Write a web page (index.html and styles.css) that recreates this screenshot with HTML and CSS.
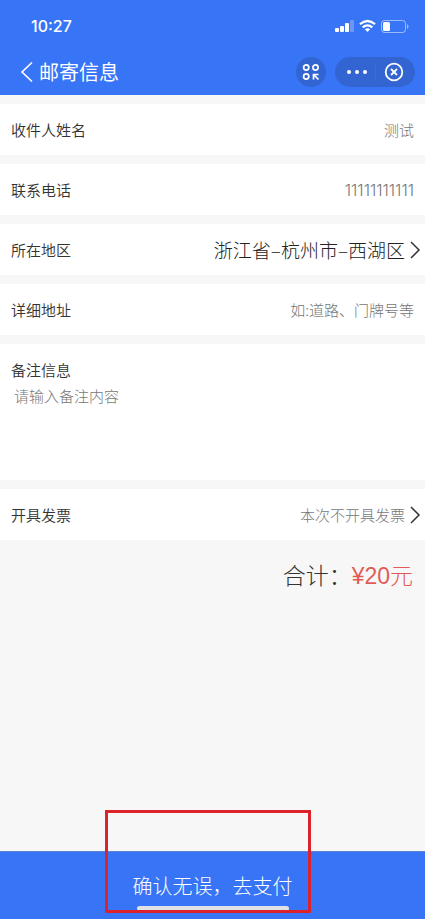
FILE: index.html
```html
<!DOCTYPE html>
<html lang="zh-CN">
<head>
<meta charset="utf-8">
<meta name="viewport" content="width=device-width, initial-scale=1">
<title>邮寄信息</title>
<link rel="stylesheet" href="styles.css">
</head>
<body>
<header class="header">
  <div class="status">
    <span class="clock">10:27</span>
    <svg class="status-icons" width="74" height="14" viewBox="0 0 74 14" aria-hidden="true">
      <g fill="#fff">
        <rect x="0" y="9" width="4" height="4" rx="1"/>
        <rect x="5" y="7" width="4" height="6" rx="1"/>
        <rect x="10" y="4" width="4" height="9" rx="1"/>
        <rect x="15" y="1" width="4" height="12" rx="1" opacity=".25"/>
        <rect x="48" y="3" width="7" height="9" rx="1.5"/>
        <path d="M72 5v5q1.500-.8 1.500-2.500T72 5z" opacity=".5"/>
        <path d="M32.500 13l-2.600-2.700q2.600-2 5.200 0z"/>
      </g>
      <rect x="46.500" y="1.500" width="24" height="12" rx="3" fill="none" stroke="#fff" opacity=".5"/>
      <g fill="none" stroke="#fff" stroke-width="2.200">
        <path d="M25 5.200q7.500-6.400 15 0"/>
        <path d="M27.700 8.300q4.800-4 9.600 0"/>
      </g>
    </svg>
  </div>
  <div class="nav">
    <button class="back" type="button" aria-label="返回">
      <svg width="14" height="22" viewBox="0 0 14 22"><path d="M12 1.500L2 11l10 9.500" fill="none" stroke="#fff" stroke-width="1.600"/></svg>
    </button>
    <h1 class="title">邮寄信息</h1>
    <button class="round" type="button" aria-label="收藏">
      <svg width="18" height="18" viewBox="0 0 18 18" fill="none" stroke="#fff" stroke-width="1.700">
        <circle cx="4.200" cy="4.500" r="2.600"/><circle cx="13.500" cy="4.500" r="2.600"/><circle cx="4.200" cy="13.500" r="2.600"/>
        <path d="M11.500 16.500v-5h5M12 12l4.500 4.500"/>
      </svg>
    </button>
    <div class="capsule">
      <button class="cap-button" type="button" aria-label="更多">
        <svg width="20" height="6" viewBox="0 0 20 6" fill="#fff"><circle cx="2" cy="3" r="2"/><circle cx="10" cy="3" r="2"/><circle cx="18" cy="3" r="2"/></svg>
      </button>
      <button class="cap-button cap-close" type="button" aria-label="关闭">
        <svg width="20" height="20" viewBox="0 0 20 20" fill="none" stroke="#fff" stroke-width="1.800"><circle cx="10" cy="10" r="8.300"/><path d="M7 7l6 6M13 7l-6 6"/></svg>
      </button>
    </div>
  </div>
</header>
<form class="form">
  <div class="row">
    <label class="label" for="name">收件人姓名</label>
    <input class="field" id="name" type="text" value="测试">
  </div>
  <div class="row">
    <label class="label" for="phone">联系电话</label>
    <input class="field field-phone" id="phone" type="tel" value="11111111111">
  </div>
  <div class="row">
    <label class="label" for="region">所在地区</label>
    <button class="picker picker-large" id="region" type="button">浙江省–杭州市–西湖区
      <svg class="chevron" width="12" height="20" viewBox="0 0 12 20"><path d="M2 2l8 8-8 8" fill="none" stroke="#333" stroke-width="1.500"/></svg>
    </button>
  </div>
  <div class="row">
    <label class="label" for="address">详细地址</label>
    <input class="field" id="address" type="text" placeholder="如:道路、门牌号等">
  </div>
  <div class="row row-note">
    <label class="label" for="note">备注信息</label>
    <textarea class="note" id="note" placeholder="请输入备注内容"></textarea>
  </div>
  <div class="row">
    <label class="label" for="invoice">开具发票</label>
    <button class="picker" id="invoice" type="button">本次不开具发票
      <svg class="chevron" width="12" height="20" viewBox="0 0 12 20"><path d="M2 2l8 8-8 8" fill="none" stroke="#333" stroke-width="1.500"/></svg>
    </button>
  </div>
  <p class="total">合计：<span class="price">¥20元</span></p>
</form>
<footer class="footer">
  <button class="pay" type="button">确认无误，去支付</button>
  <span class="home-bar"></span>
  <span class="highlight"></span>
</footer>
</body>
</html>
```
FILE: styles.css
```css
* {
  box-sizing: border-box;
}

body {
  display: flex;
  flex-direction: column;
  min-height: 100vh;
  margin: 0;
  background: #f7f7f7;
  color: #333;
  font-family: "Noto Sans CJK SC", sans-serif;
  font-size: 15px;
  font-weight: 300;
}

button,
input,
textarea {
  margin: 0;
  padding: 0;
  border: 0;
  background: none;
  color: inherit;
  font: inherit;
}

svg {
  display: block;
  flex: none;
}

.header {
  padding: 14px 10px 8px 20px;
  background: #3875f6;
  color: #fff;
}

.status {
  display: flex;
  align-items: center;
  justify-content: space-between;
  height: 24px;
  padding: 0 6px 0 11px;
}

.clock {
  font-family: Inter, sans-serif;
  font-size: 16px;
  font-weight: 500;
}

.nav {
  display: flex;
  align-items: center;
  height: 30px;
  margin-top: 19px;
}

.title {
  flex: 1;
  margin: 0 0 0 5px;
  font-size: 20px;
  font-weight: 400;
  line-height: 30px;
}

.round,
.capsule {
  display: flex;
  align-items: center;
  justify-content: center;
  height: 30px;
  border-radius: 15px;
  background: #3265d1;
}

.round {
  width: 30px;
  margin-right: 9px;
}

.capsule {
  width: 80px;
}

.cap-button {
  display: flex;
  flex: 1;
  align-items: center;
  justify-content: center;
  height: 18px;
  padding-left: 4px;
}

.cap-close {
  padding: 0 3px 0 0;
  border-left: 1px solid #3c6dd6;
}

.form {
  display: flex;
  flex: 1;
  flex-direction: column;
  gap: 9px;
  padding-top: 9px;
}

.row {
  display: flex;
  align-items: center;
  justify-content: space-between;
  min-height: 51px;
  padding: 0 11px;
  background: #fff;
}

.label {
  flex: none;
  line-height: 24px;
  font-weight: 350;
}

.field {
  flex: 1;
  min-width: 0;
  color: #777;
  text-align: right;
}

.field-phone {
  font-family: Inter, sans-serif;
  font-size: 16px;
}

.field::placeholder,
.note::placeholder {
  color: #777;
  opacity: 1;
}

.picker {
  display: flex;
  align-items: center;
  gap: 4px;
  margin-right: -7px;
  color: #777;
}

.picker-large {
  color: #222;
  font-size: 19px;
}

.row-note {
  flex-direction: column;
  align-items: stretch;
  justify-content: flex-start;
  min-height: 136px;
  padding-top: 14px;
}

.note {
  height: 90px;
  padding: 3px;
  resize: none;
}

.total {
  margin: 9px 12px 0;
  font-family: "Liberation Sans", "Noto Sans CJK SC", sans-serif;
  font-size: 23px;
  line-height: 36px;
  text-align: right;
}

.price {
  color: #e15b58;
}

.footer {
  position: relative;
  border-top: 1px solid #5f83cf;
  background: #3875f6;
}

.pay {
  display: block;
  width: 100%;
  height: 67px;
  color: #fff;
  font-size: 20px;
}

.home-bar {
  position: absolute;
  bottom: 8px;
  left: 50%;
  width: 152px;
  height: 5px;
  margin-left: -76px;
  border-radius: 3px;
  background: #e2e2e6;
}

.highlight {
  position: absolute;
  bottom: 6px;
  left: 50%;
  width: 206px;
  height: 103px;
  margin-left: -108px;
  border: 3px solid #dc222b;
  pointer-events: none;
}
```
